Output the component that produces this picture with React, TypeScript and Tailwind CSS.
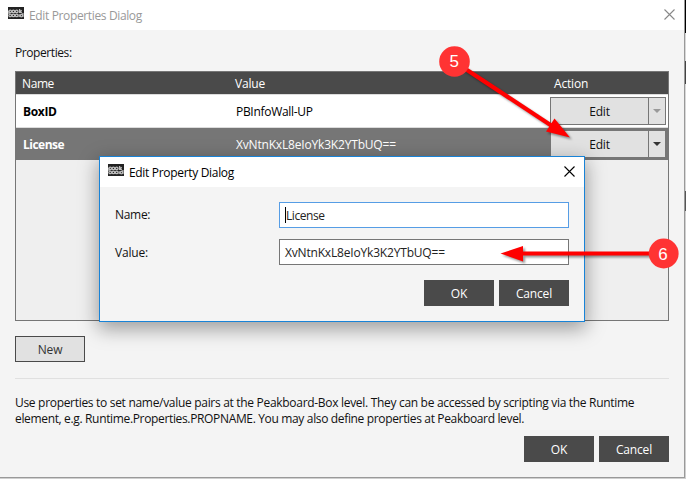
import type { ReactNode } from "react";

function Logo() {
  return (
    <svg width="16" height="12" viewBox="0 0 16 12" className="shrink-0">
      <rect width="16" height="12" fill="#222" />
      <g fill="none" stroke="#bdbdbd" strokeWidth="1.3">
        <circle cx="2.2" cy="4.4" r="1.3" />
        <circle cx="5.4" cy="4.4" r="1.3" />
        <circle cx="8.7" cy="4.4" r="1.3" />
        <path d="M1 4v3M11.6 2v4M13.8 3.4l-2 1.3 2 1.2" />
        <circle cx="2.2" cy="8.4" r="1.3" />
        <circle cx="5.4" cy="8.4" r="1.3" />
        <circle cx="8.7" cy="8.4" r="1.3" />
        <path d="M11.2 7.2v2.8M14.9 6v4" />
        <circle cx="13.4" cy="8.6" r="1.2" />
      </g>
    </svg>
  );
}

function Close({ color }: { color: string }) {
  return (
    <svg width="11" height="11" viewBox="0 0 11 11" fill="none" stroke={color} strokeWidth="1.1">
      <path d="M.5.5l10 10M10.5.5l-10 10" />
    </svg>
  );
}

function DarkButton({ children }: { children: ReactNode }) {
  return (
    <button className="h-[26px] w-[70px] bg-[#4a4a4a] pt-px text-center text-white">{children}</button>
  );
}

function SplitButton({ arrow }: { arrow: string }) {
  return (
    <div className="flex h-7 w-[116px] border border-[#767676] bg-[#e1e1e1] text-[#111]">
      <button className="w-[97px] pt-0.5 text-center">Edit</button>
      <button className="flex flex-1 items-center justify-center border-l border-[#767676]">
        <svg width="8" height="4" viewBox="0 0 8 4">
          <path d="M0 0h8L4 4z" fill={arrow} />
        </svg>
      </button>
    </div>
  );
}

function EditDialog() {
  return (
    <div className="absolute left-[99px] top-[156px] flex h-[166px] w-[486px] flex-col border border-[#1883d7] bg-[#f4f4f4] shadow-[0_6px_18px_1px_rgba(0,0,0,0.36)]">
      <header className="flex h-[30px] items-center bg-white pl-2 pr-[9px]">
        <div className="-mt-1">
          <Logo />
        </div>
        <span className="ml-[5px] flex-1 pt-0.5 tracking-[-0.32px] text-black">Edit Property Dialog</span>
        <div className="-mt-0.5">
          <Close color="#000" />
        </div>
      </header>
      <div className="flex flex-col pl-[15px] pr-[15px] pt-[15px]">
        <div className="flex h-[26px] items-center">
          <span className="w-[164px] tracking-[-0.3px]">Name:</span>
          <div className="flex h-[26px] flex-1 items-center border border-[#569de5] bg-white pl-[5px] text-[#222]">
            <span className="h-4 w-px bg-black" />
            <span className="pt-0.5 tracking-[-0.45px]">License</span>
          </div>
        </div>
        <div className="mt-[11px] flex h-[26px] items-center">
          <span className="w-[164px] pt-0.5">Value:</span>
          <div className="flex h-[26px] flex-1 items-center border border-[#767676] bg-white pl-[5px] pt-0.5 text-[#222]">
            XvNtnKxL8eIoYk3K2YTbUQ==
          </div>
        </div>
        <div className="mt-[15px] flex justify-end gap-[5px]">
          <DarkButton>OK</DarkButton>
          <DarkButton>Cancel</DarkButton>
        </div>
      </div>
    </div>
  );
}

function Annotations() {
  return (
    <svg className="pointer-events-none absolute left-0 top-0" width="686" height="479" viewBox="0 0 686 479">
      <g className="drop-shadow-[2px_2px_1px_rgba(0,0,0,0.4)]" fill="#f00" stroke="#f00">
        <path d="M464 68L552 126" strokeWidth="4.2" />
        <path d="M570 137.5L554.5 118.5L546 131.5z" stroke="none" />
        <path d="M650 253.5H521" strokeWidth="4" />
        <path d="M500.5 253.5L523 246v15.5z" stroke="none" />
      </g>
      <circle cx="454.5" cy="61.5" r="15.3" fill="#ff3333" />
      <circle cx="663.7" cy="253.5" r="14.9" fill="#ff3333" />
      <g fill="#fff" textAnchor="middle" className="font-['Liberation_Sans',sans-serif] text-[17px] tracking-normal">
        <text x="454.2" y="67.3">5</text>
        <text x="663" y="259.5">6</text>
      </g>
    </svg>
  );
}

export default function App() {
  return (
    <div className="relative flex h-[479px] w-[686px] overflow-hidden bg-[#cfcfcf] font-['Open_Sans','Noto_Sans',sans-serif] text-[12px] leading-4 tracking-[-0.18px] text-[#111]">
      <div className="flex h-[478px] w-[685px] flex-col border-b border-r border-[#999] bg-[#f4f4f4]">
        <header className="flex h-[30px] shrink-0 items-center bg-white pl-2 pr-[9px]">
          <div className="-mt-1">
            <Logo />
          </div>
          <span className="ml-[5px] flex-1 pt-0.5 tracking-[-0.36px] text-[#999]">Edit Properties Dialog</span>
          <div className="-mt-0.5">
            <Close color="#888" />
          </div>
        </header>
        <main className="flex flex-col pl-[15px] pr-[15px]">
          <div className="mt-[15px] h-[26px] tracking-[-0.42px]">Properties:</div>
          <section className="h-[250px] border border-[#767676] bg-[#efefef]">
            <div className="flex h-[22px] items-center bg-[#4a4a4a] pl-1.5 pt-0.5 text-white">
              <span className="w-[213px] tracking-[-0.4px]">Name</span>
              <span className="w-[319px]">Value</span>
              <span>Action</span>
            </div>
            <div className="flex h-[34px] items-center border-y border-[#dcdcdc] bg-white pl-[7px] pr-0.5 text-black">
              <b className="w-[213px] pt-0.5 font-bold tracking-[-0.35px]">BoxID</b>
              <span className="flex-1 pt-0.5 tracking-[-0.3px]">PBInfoWall-UP</span>
              <SplitButton arrow="#999" />
            </div>
            <div className="flex h-8 items-center bg-[#767676] pl-[7px] pr-0.5 text-white">
              <b className="w-[213px] pt-0.5 font-bold tracking-[-0.5px]">License</b>
              <span className="flex-1 pt-0.5">XvNtnKxL8eIoYk3K2YTbUQ==</span>
              <SplitButton arrow="#333" />
            </div>
          </section>
          <button className="mt-[15px] h-[26px] w-[70px] border border-[#4a4a4a] bg-[#e1e1e1] pt-px text-center text-[#333]">
            New
          </button>
          <hr className="mt-4 border-[#e0e0e0]" />
          <p className="mt-4 whitespace-nowrap tracking-[-0.305px]">
            Use properties to set name/value pairs at the Peakboard-Box level. They can be accessed by scripting via the Runtime
            <br />
            <span className="tracking-[-0.345px]">
              element, e.g. Runtime.Properties.PROPNAME. You may also define properties at Peakboard level.
            </span>
          </p>
          <div className="mt-[9px] flex justify-end gap-[5px]">
            <DarkButton>OK</DarkButton>
            <DarkButton>Cancel</DarkButton>
          </div>
        </main>
      </div>
      <aside className="flex w-px flex-col">
        <div className="h-[33px] bg-black" />
        <div className="h-7 bg-[#d8d8d8]" />
        <div className="h-[23px] bg-[#444]" />
        <div className="h-[107px] bg-[#d8d8d8]" />
        <div className="h-5 bg-[#555]" />
      </aside>
      <EditDialog />
      <Annotations />
    </div>
  );
}
